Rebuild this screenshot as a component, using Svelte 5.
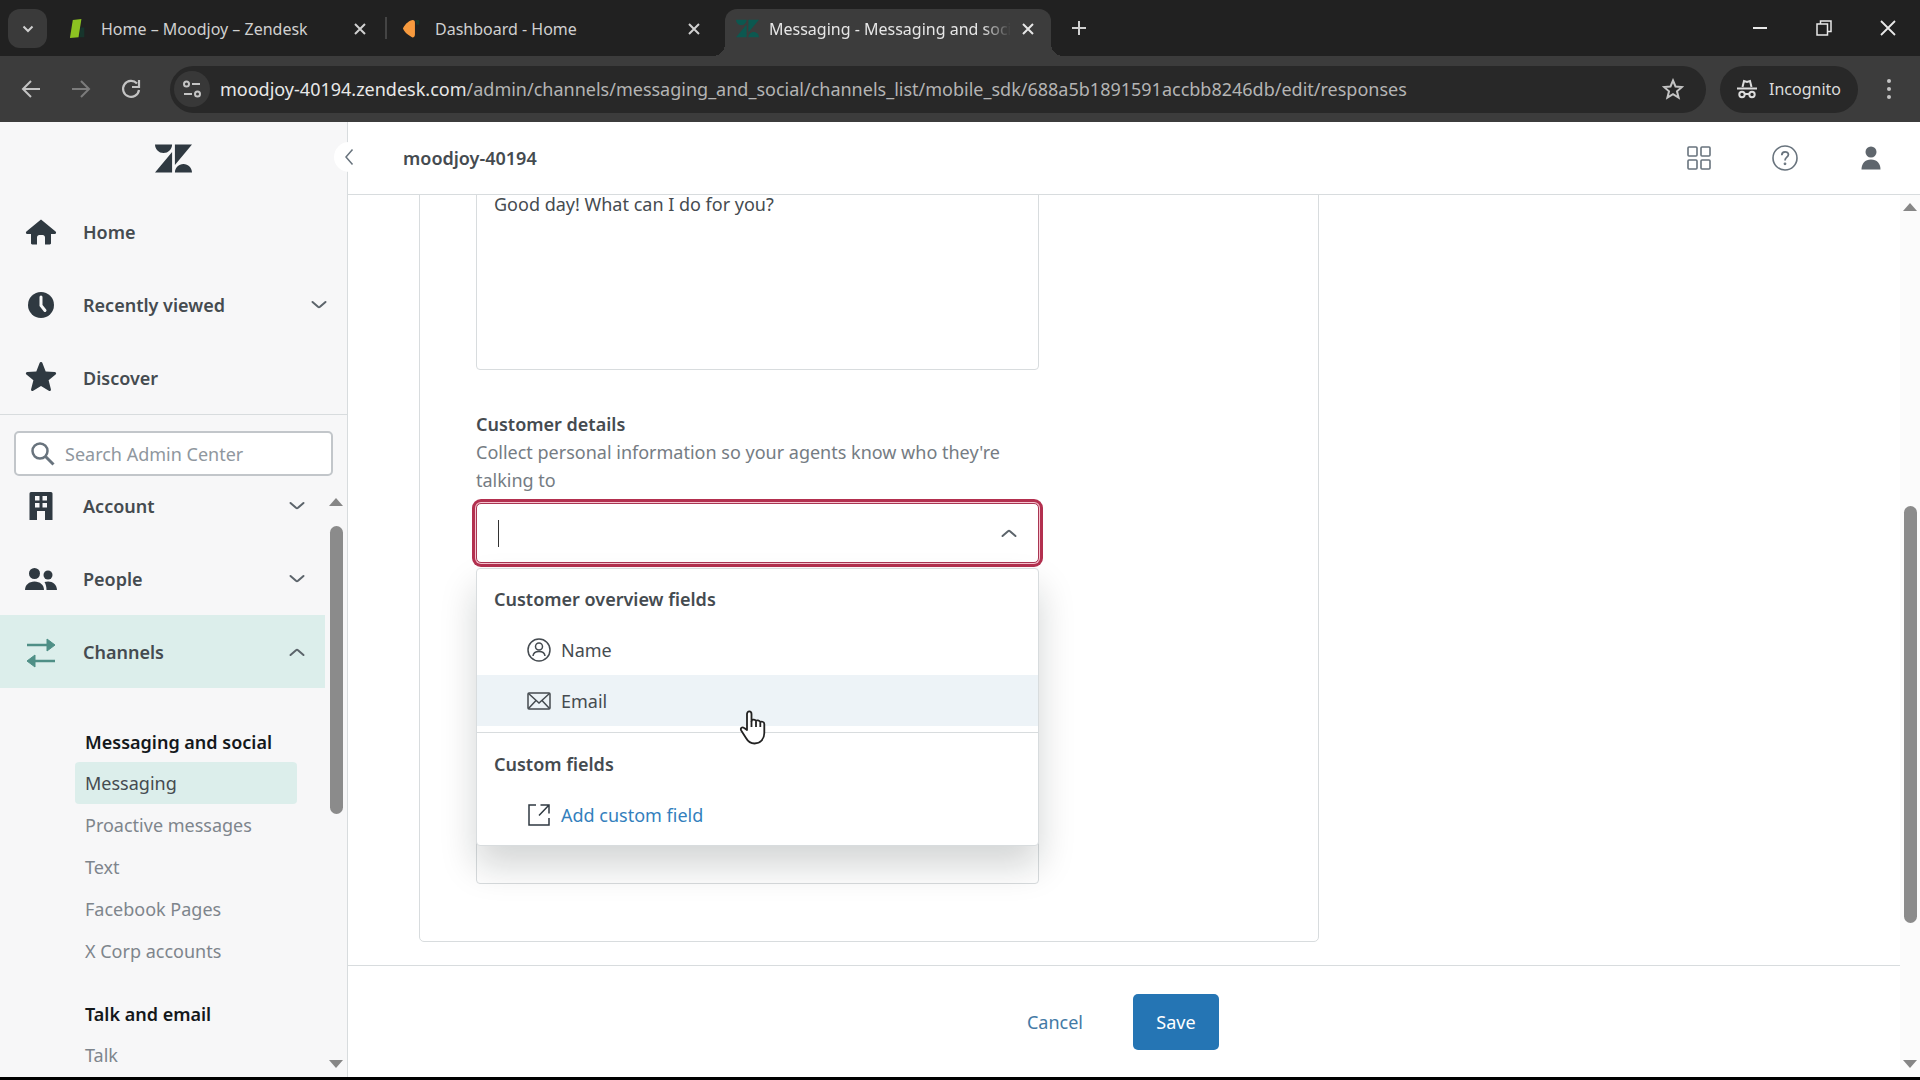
<script lang="ts">
  const tabs = [
    { title: 'Home – Moodjoy – Zendesk', icon: 'support', active: false },
    { title: 'Dashboard - Home', icon: 'chat', active: false },
    { title: 'Messaging - Messaging and social', icon: 'admin', active: true }
  ];

  const mainNav = [
    { label: 'Home', icon: 'home', chevron: '' },
    { label: 'Recently viewed', icon: 'clock', chevron: 'down' },
    { label: 'Discover', icon: 'star', chevron: '' }
  ];

  const adminNav = [
    { label: 'Account', icon: 'building', chevron: 'down', active: false },
    { label: 'People', icon: 'people', chevron: 'down', active: false },
    { label: 'Channels', icon: 'channels', chevron: 'up', active: true }
  ];

  const groups = [
    {
      title: 'Messaging and social',
      links: ['Messaging', 'Proactive messages', 'Text', 'Facebook Pages', 'X Corp accounts']
    },
    { title: 'Talk and email', links: ['Talk'] }
  ];

  let current = $state('Messaging');
  let response = $state('Good day! What can I do for you?');
  let followUp = $state('');
  let search = $state('');
  let field = $state('');
</script>

{#snippet zendesk()}
  <path d="M12.914 2.904V16.29L24 2.905H12.914zM0 2.906C0 5.966 2.483 8.45 5.543 8.45s5.542-2.484 5.543-5.544H0zm11.086 4.807L0 21.096h11.086V7.714zm7.37 7.84c-3.063 0-5.542 2.48-5.542 5.543H24c0-3.06-2.48-5.543-5.543-5.543z" />
{/snippet}

{#snippet chevron(dir: string)}
  <svg class="chevron" viewBox="0 0 16 10" fill="none" stroke="currentColor" stroke-width="2" stroke-linecap="round">
    {#if dir === 'up'}
      <path d="M1.5 8 L7 3.2 Q8 2.4 9 3.2 L14.5 8" />
    {:else}
      <path d="M1.5 2 L7 6.8 Q8 7.6 9 6.8 L14.5 2" />
    {/if}
  </svg>
{/snippet}

{#snippet cross()}
  <svg width="14" height="14" viewBox="0 0 14 14" stroke="currentColor" stroke-width="2"><path d="M2 2l10 10M12 2L2 12" /></svg>
{/snippet}

{#snippet navIcon(name: string)}
  <svg class="nav-icon" viewBox="0 0 32 32" fill="currentColor">
    {#if name === 'home'}
      <path d="M16 3.5 1.4 15.4c-1 .9-.4 2.6.9 2.6H6v9.2c0 .7.5 1.2 1.200 1.200H12v-7c0-1.300 1-2.300 2.300-2.300h3.400c1.300 0 2.300 1 2.300 2.300v7h4.800c.7 0 1.200-.5 1.200-1.200V18h3.700c1.300 0 1.900-1.700.9-2.600z" />
    {:else if name === 'clock'}
      <circle cx="16" cy="16" r="13" />
      <path d="M16 8v8.500l4 5" fill="none" stroke="#f7f8f8" stroke-width="3" stroke-linecap="round" />
    {:else if name === 'star'}
      <path d="M14.700 0.800c.5-1.100 2.100-1.100 2.600 0l3.400 8.600 9.100.6c1.300.1 1.800 1.700.8 2.500l-7 5.800 2.300 9c.3 1.200-1 2.200-2.100 1.500L16 23.900l-7.800 4.900c-1.100.7-2.400-.3-2.100-1.500l2.300-9-7-5.800c-1-.8-.5-2.400.8-2.500l9.100-.6z" />
    {:else if name === 'building'}
      <path fill-rule="evenodd" d="M6 2h20a1.500 1.500 0 0 1 1.500 1.500V30H20v-9h-8v9H4.500V3.500A1.500 1.500 0 0 1 6 2zm4 4v4.500h4.500V6zm7.500 0v4.500H22V6zM10 13v4.500h4.500V13zm7.500 0v4.500H22V13z" />
    {:else if name === 'people'}
      <circle cx="9.500" cy="10.500" r="5.500" />
      <path d="M0 27c0-5 4-8.500 9.500-8.500S19 22 19 27z" />
      <circle cx="23" cy="12" r="4.500" />
      <path d="M19.500 19c6-2 12.500 1.200 12.500 8H21.500c0-3-.6-5.800-2-8z" />
    {:else}
      <g fill="#4f8f86" stroke="#4f8f86">
        <path d="M2 9h21M30 25H9" stroke-width="2.500" />
        <path d="M22 3l8 6-8 6zM10 19l-8 6 8 6z" />
      </g>
    {/if}
  </svg>
{/snippet}

<div class="window">
  <header class="tabstrip">
    <button class="tab-search" aria-label="Search tabs">
      <svg width="12" height="8" viewBox="0 0 12 8" fill="none" stroke="currentColor" stroke-width="2"><path d="M1.500 1.500 6 6l4.500-4.500" /></svg>
    </button>
    <div class="tabs">
      {#each tabs as tab}
        <div class="tab" class:active={tab.active}>
          <svg class="favicon" viewBox="0 0 24 24">
            {#if tab.icon === 'support'}
              <path d="M5 3l9-1-3 19-9 1z" fill="#8cc221" />
              <path d="M13 11h4v10h-5z" fill="#17352c" />
            {:else if tab.icon === 'chat'}
              <path d="M11 3c2 0 2.500 1 2.500 3v12c0 2-1 4-3 3C6 19 2 15 1 12 2 9 6 4 11 3z" fill="#f79a3e" />
              <path d="M14 3h4v5h-3z" fill="#17352c" />
            {:else}
              <g fill="#0c5850">{@render zendesk()}</g>
            {/if}
          </svg>
          <span class="tab-title">{tab.title}</span>
          <button class="plain" aria-label="Close tab">{@render cross()}</button>
        </div>
      {/each}
    </div>
    <button class="plain new-tab" aria-label="New tab">
      <svg width="16" height="16" viewBox="0 0 16 16" stroke="currentColor" stroke-width="2"><path d="M8 1v14M1 8h14" /></svg>
    </button>
    <div class="controls">
      <button aria-label="Minimize"><svg width="16" height="16" viewBox="0 0 16 16" stroke="currentColor" stroke-width="2"><path d="M1 8h14" /></svg></button>
      <button aria-label="Restore"><svg width="16" height="16" viewBox="0 0 16 16" fill="none" stroke="currentColor" stroke-width="1.500"><path d="M1 4h10.500v11H1zM4.500 4V1H15v10.500h-3.500" /></svg></button>
      <button aria-label="Close"><svg width="16" height="16" viewBox="0 0 16 16" stroke="currentColor" stroke-width="1.800"><path d="M1 1l14 14M15 1L1 15" /></svg></button>
    </div>
  </header>

  <div class="toolbar">
    <button class="tool" aria-label="Back">
      <svg width="20" height="20" viewBox="0 0 20 20" fill="none" stroke="currentColor" stroke-width="2"><path d="M19 10H2.500M10 2l-8 8 8 8" /></svg>
    </button>
    <button class="tool dim" aria-label="Forward">
      <svg width="20" height="20" viewBox="0 0 20 20" fill="none" stroke="currentColor" stroke-width="2"><path d="M1 10h16.500M10 2l8 8-8 8" /></svg>
    </button>
    <button class="tool" aria-label="Reload">
      <svg width="20" height="20" viewBox="0 0 20 20" fill="none" stroke="currentColor" stroke-width="2.200"><path d="M16 4.500A8 8 0 1 0 18 11" /><path d="M18 1v7h-7" /></svg>
    </button>
    <div class="omnibox">
      <button class="site-info" aria-label="Site information">
        <svg width="20" height="20" viewBox="0 0 20 20" fill="none" stroke="currentColor" stroke-width="2"><circle cx="4.500" cy="5" r="2.500" /><path d="M10 5h8M2 15h8" /><circle cx="15.500" cy="15" r="2.500" /></svg>
      </button>
      <span class="url"><b>moodjoy-40194.zendesk.com</b>/admin/channels/messaging_and_social/channels_list/mobile_sdk/688a5b1891591accbb8246db/edit/responses</span>
      <button class="plain" aria-label="Bookmark this tab">
        <svg width="22" height="22" viewBox="0 0 22 22" fill="none" stroke="currentColor" stroke-width="2"><path d="M11 2.500l2.500 6 6.500.5-5 4.300 1.600 6.400L11 16.200l-5.600 3.500L7 13.300 2 9l6.500-.5z" /></svg>
      </button>
    </div>
    <div class="incognito">
      <svg width="20" height="20" viewBox="0 0 20 20" fill="none" stroke="currentColor" stroke-width="2"><path d="M5.500 8 7 2l3 1 3-1 1.500 6M0 9.500h20" /><circle cx="5" cy="15.500" r="2.700" /><circle cx="15" cy="15.500" r="2.700" /><path d="M7.500 15h5" /></svg>
      Incognito
    </div>
    <button class="tool" aria-label="Chrome menu">
      <svg width="6" height="22" viewBox="0 0 6 22" fill="currentColor"><circle cx="3" cy="3" r="2" /><circle cx="3" cy="11" r="2" /><circle cx="3" cy="19" r="2" /></svg>
    </button>
  </div>

  <div class="page">
    <aside class="sidebar">
      <div class="logo">
        <svg width="37" height="37" viewBox="0 0 24 24" fill="#2f3941">{@render zendesk()}</svg>
      </div>
      <nav class="main-nav">
        {#each mainNav as item}
          <button class="nav-row">
            {@render navIcon(item.icon)}
            <span>{item.label}</span>
            {#if item.chevron}{@render chevron(item.chevron)}{/if}
          </button>
        {/each}
      </nav>
      <label class="search">
        <svg width="24" height="24" viewBox="0 0 24 24" fill="none" stroke="#68737d"><circle cx="9" cy="9" r="7.500" stroke-width="2.500" /><path d="M14.500 14.500l8 8" stroke-width="3" /></svg>
        <input type="text" placeholder="Search Admin Center" aria-label="Search Admin Center" bind:value={search} />
      </label>
      <div class="admin">
        <nav class="admin-nav">
          {#each adminNav as item}
            <button class="nav-row" class:active={item.active}>
              {@render navIcon(item.icon)}
              <span>{item.label}</span>
              {@render chevron(item.chevron)}
            </button>
          {/each}
          {#each groups as group}
            <section>
              <h2>{group.title}</h2>
              {#each group.links as link}
                <a href="#{link}" class:current={link === current} onclick={() => (current = link)}><span>{link}</span></a>
              {/each}
            </section>
          {/each}
        </nav>
        <div class="scrollbar side">
          <i class="arrow up"></i>
          <div class="track"><i class="thumb"></i></div>
          <i class="arrow down"></i>
        </div>
      </div>
      <button class="collapse" aria-label="Collapse sidebar">
        <svg width="10" height="18" viewBox="0 0 10 18" fill="none" stroke="#68737d" stroke-width="1.500"><path d="M8.500 1.500 2 9l6.500 7.500" /></svg>
      </button>
    </aside>

    <main>
      <div class="topbar">
        <h1>moodjoy-40194</h1>
        <button class="plain" aria-label="Products">
          <svg width="26" height="26" viewBox="0 0 26 26" fill="none" stroke="currentColor" stroke-width="1.600"><rect x="2" y="2" width="9" height="9" rx="1" /><rect x="15" y="2" width="9" height="9" rx="1" /><rect x="2" y="15" width="9" height="9" rx="1" /><rect x="15" y="15" width="9" height="9" rx="1" /></svg>
        </button>
        <button class="plain" aria-label="Help">
          <svg width="26" height="26" viewBox="0 0 26 26" fill="none" stroke="currentColor" stroke-width="1.600"><circle cx="13" cy="13" r="12" /><path d="M9.800 10.200c0-4.600 6.600-4.200 6.600-.6 0 2.600-3.400 2.700-3.400 6" stroke-width="1.800" /><circle cx="13" cy="18.800" r=".6" /></svg>
        </button>
        <button class="plain" aria-label="Profile">
          <svg width="26" height="26" viewBox="0 0 26 26" fill="#5f666d"><circle cx="13" cy="7" r="5.500" /><path d="M3.500 24.500c0-6 3.500-10 9.500-10s9.500 4 9.500 10z" /></svg>
        </button>
      </div>

      <div class="body">
        <div class="column">
          <div class="scroll">
            <div class="card">
              <textarea class="response" aria-label="First message" bind:value={response}></textarea>
              <label class="title" for="details">Customer details</label>
              <p class="hint">Collect personal information so your agents know who they're talking to</p>
              <div class="combo">
                <i class="caret"></i>
                <input id="details" type="text" role="combobox" aria-expanded="true" aria-controls="fields" bind:value={field} />
                {@render chevron('up')}
                <div class="menu" id="fields">
                  <h3>Customer overview fields</h3>
                  <button class="option">
                    <svg width="24" height="24" viewBox="0 0 24 24" fill="none" stroke="currentColor" stroke-width="1.500"><circle cx="12" cy="12" r="11" /><circle cx="12" cy="8.500" r="3.500" /><path d="M6 18c.5-6 11.500-6 12 0" /></svg>
                    Name
                  </button>
                  <button class="option hover">
                    <svg width="24" height="24" viewBox="0 0 24 24" fill="none" stroke="currentColor" stroke-width="1.500"><rect x="1" y="4" width="22" height="16" rx="1" /><path d="M1.500 4.500 12 14 22.500 4.500M1.500 19.500l7.500-8M22.500 19.500l-7.500-8" /></svg>
                    Email
                    <svg class="pointer" viewBox="0 0 28 35" fill="#fff" stroke="#222" stroke-width="1.800" stroke-linejoin="round">
                      <path d="M8 20V4c0-3.500 4.500-3.500 4.500 0v7c0-2 4.200-2 4.500.5 0-1.800 4-1.500 4.300 1 .5-1.500 4-1 4 1.500v9c0 6-3.800 10.500-9.800 10.500-4.500 0-6.500-2-8.500-5.500L2.200 20.500c-1.200-2.500 1-4 3-2.500z" />
                      <path d="M12.500 11v6M17 12v5M21.300 13v4" />
                    </svg>
                  </button>
                  <hr />
                  <h3>Custom fields</h3>
                  <a class="option" href="#custom-field">
                    <svg width="24" height="24" viewBox="0 0 24 24" fill="none" stroke="#2f3941" stroke-width="1.500"><path d="M9 2H2v20h20v-7M13.500 2H22v8.500M22 2 12 12.500" /></svg>
                    Add custom field
                  </a>
                </div>
              </div>
              <textarea class="follow-up" aria-label="Follow-up message" bind:value={followUp}></textarea>
            </div>
          </div>
          <footer>
            <div class="actions">
              <button class="cancel">Cancel</button>
              <button class="save">Save</button>
            </div>
          </footer>
        </div>
        <div class="scrollbar">
          <i class="arrow up"></i>
          <div class="track"><i class="thumb"></i></div>
          <i class="arrow down"></i>
        </div>
      </div>
    </main>
  </div>
</div>

<style>
  :global(body) {
    margin: 0;
    overflow: hidden;
  }

  .window {
    height: 100vh;
    box-sizing: border-box;
    display: flex;
    flex-direction: column;
    border-bottom: 3px solid #000;
    font-family: 'Noto Sans', sans-serif;
    font-size: 18px;
    line-height: 28px;
    color: #454b50;
    background: #3c3c3c;
  }

  .window * {
    box-sizing: border-box;
  }

  button,
  input,
  textarea {
    font: inherit;
    color: inherit;
    border: 0;
    background: none;
    padding: 0;
    outline: none;
  }

  svg {
    flex: none;
    display: block;
  }

  .plain {
    display: flex;
  }

  /* browser tabs */
  .tabstrip {
    flex: 0 0 56px;
    display: flex;
    padding-left: 8px;
    background: #212121;
    color: #d0d0d0;
    font-size: 16px;
  }

  .tab-search {
    width: 39px;
    height: 39px;
    margin: 9px 10px 0 0;
    display: grid;
    place-items: center;
    border-radius: 12px;
    background: #3a3a3a;
  }

  .tabs {
    display: flex;
    gap: 8px;
    min-width: 0;
  }

  .tab {
    position: relative;
    flex: 0 1 326px;
    width: 326px;
    min-width: 0;
    margin-top: 9px;
    padding: 0 16px 8px 11px;
    display: flex;
    align-items: center;
    gap: 10px;
  }

  .tab:first-child::after {
    content: '';
    position: absolute;
    right: -4px;
    top: 8px;
    width: 2px;
    height: 22px;
    background: #444;
  }

  .tab.active {
    background: #3c3c3c;
    border-radius: 12px 12px 0 0;
    color: #e6e6e6;
  }

  .tab.active::before,
  .tab.active::after {
    content: '';
    position: absolute;
    bottom: 0;
    top: auto;
    width: 12px;
    height: 12px;
  }

  .tab.active::before {
    left: -12px;
    background: radial-gradient(circle at 0 0, transparent 12px, #3c3c3c 12px);
  }

  .tab.active::after {
    right: -12px;
    background: radial-gradient(circle at 100% 0, transparent 12px, #3c3c3c 12px);
  }

  .favicon {
    width: 23px;
    height: 23px;
  }

  .tab-title {
    flex: 1;
    overflow: hidden;
    white-space: nowrap;
  }

  .active .tab-title {
    mask-image: linear-gradient(90deg, #000 88%, transparent);
  }

  .new-tab {
    margin: 20px 0 0 20px;
    align-self: flex-start;
  }

  .controls {
    margin-left: auto;
    display: flex;
    color: #e8e8e8;
  }

  .controls button {
    width: 64px;
    display: grid;
    place-items: center;
  }

  /* address bar */
  .toolbar {
    flex: 0 0 66px;
    display: flex;
    align-items: center;
    gap: 4px;
    padding: 0 8px;
    color: #c4c4c4;
    background: #3c3c3c;
  }

  .tool {
    width: 46px;
    height: 46px;
    display: grid;
    place-items: center;
  }

  .dim {
    color: #7c7c7c;
  }

  .omnibox {
    flex: 1;
    min-width: 0;
    height: 47px;
    margin: 0 10px 0 12px;
    padding: 0 22px 0 4px;
    display: flex;
    align-items: center;
    gap: 10px;
    border-radius: 24px;
    background: #282828;
  }

  .site-info {
    width: 36px;
    height: 36px;
    display: grid;
    place-items: center;
    border-radius: 50%;
    background: #383838;
  }

  .url {
    flex: 1;
    overflow: hidden;
    white-space: nowrap;
    color: #b4b4b4;
  }

  .url b {
    font-weight: 400;
    color: #e8e8e8;
  }

  .incognito {
    height: 47px;
    width: 138px;
    margin-right: 4px;
    display: flex;
    align-items: center;
    justify-content: center;
    gap: 12px;
    border-radius: 24px;
    background: #282828;
    color: #dcdcdc;
    font-size: 16px;
  }

  /* admin center */
  .page {
    flex: 1;
    min-height: 0;
    display: flex;
    background: #fff;
  }

  .sidebar {
    position: relative;
    flex: 0 0 348px;
    min-width: 0;
    display: flex;
    flex-direction: column;
    border-right: 1px solid #d8dcde;
    background: #f7f7f8;
  }

  .logo {
    flex: 0 0 73px;
    display: grid;
    place-items: center;
  }

  .main-nav {
    border-bottom: 1px solid #d8dcde;
  }

  .nav-row {
    width: 100%;
    height: 73px;
    padding: 0 20px 0 25px;
    display: flex;
    align-items: center;
    gap: 26px;
    text-align: left;
    font-weight: 600;
  }

  .nav-row span {
    flex: 1;
  }

  .nav-row.active {
    background: #dceeeb;
  }

  .nav-icon {
    width: 32px;
    height: 32px;
    color: #2f3941;
  }

  .chevron {
    width: 16px;
    height: 10px;
    color: #5c646b;
  }

  .search {
    flex: 0 0 45px;
    margin: 16px 14px 0;
    padding: 0 15px;
    display: flex;
    align-items: center;
    gap: 10px;
    border: 2px solid #c2c6ca;
    border-radius: 5px;
    background: #fff;
  }

  .search input {
    flex: 1;
    min-width: 0;
  }

  .search input::placeholder {
    color: #8f979e;
    opacity: 1;
  }

  .admin {
    flex: 1;
    min-height: 0;
    display: flex;
    overflow: hidden;
  }

  .admin-nav {
    flex: 1;
    min-width: 0;
    margin-top: -7px;
  }

  section {
    padding: 40px 28px 0 75px;
  }

  section + section {
    padding-top: 28px;
  }

  section h2 {
    margin: 0 0 6px;
    padding-left: 10px;
    font-size: 18px;
    line-height: 28px;
    font-weight: 600;
    white-space: nowrap;
    color: #14181b;
  }

  section a {
    display: block;
    height: 42px;
    padding: 7px 0 0 10px;
    border-radius: 4px;
    color: #7e858c;
    text-decoration: none;
  }

  section a.current {
    background: #dceeeb;
    color: #454b50;
  }

  .collapse {
    position: absolute;
    top: 20px;
    right: -17px;
    width: 30px;
    height: 30px;
    display: grid;
    place-items: center;
    border-radius: 50%;
    background: #fff;
  }

  .scrollbar {
    flex: 0 0 20px;
    display: flex;
    flex-direction: column;
    align-items: center;
    padding: 8px 0 9px;
    background: #fbfbfb;
  }

  .scrollbar.side {
    flex-basis: 22px;
    padding-top: 22px;
    background: none;
  }

  .arrow {
    width: 0;
    height: 0;
    border: 7px solid transparent;
  }

  .arrow.up {
    border-top: 0;
    border-bottom: 8px solid #868686;
  }

  .arrow.down {
    border-bottom: 0;
    border-top: 8px solid #868686;
  }

  .track {
    flex: 1;
    display: flex;
    flex-direction: column;
    justify-content: flex-end;
    padding-bottom: 137px;
  }

  .thumb {
    width: 13px;
    height: 417px;
    border-radius: 7px;
    background: #8b8b8b;
  }

  .side .track {
    justify-content: flex-start;
    padding: 20px 0 0;
  }

  .side .thumb {
    height: 288px;
  }

  main {
    flex: 1;
    min-width: 0;
    display: flex;
    flex-direction: column;
  }

  .topbar {
    flex: 0 0 73px;
    display: flex;
    align-items: center;
    gap: 60px;
    padding: 0 36px 0 55px;
    border-bottom: 1px solid #d8dcde;
    color: #68737d;
  }

  h1 {
    flex: 1;
    margin: 0;
    font-size: 18px;
    line-height: 28px;
    font-weight: 600;
    color: #454b50;
  }

  .body {
    flex: 1;
    min-height: 0;
    display: flex;
  }

  .column {
    flex: 1;
    min-width: 0;
    display: flex;
    flex-direction: column;
  }

  .scroll {
    flex: 1;
    min-height: 0;
    display: flex;
    flex-direction: column;
    justify-content: flex-end;
    padding: 0 71px 23px;
    overflow: hidden;
  }

  .card {
    max-width: 900px;
    padding: 0 279px 57px 56px;
    display: flex;
    flex-direction: column;
    border: 1px solid #d8dcde;
    border-radius: 5px;
  }

  textarea {
    display: block;
    border: 1px solid #d8dcde;
    border-radius: 4px;
    resize: none;
    padding: 13px 17px;
  }

  .response {
    height: 194px;
  }

  .title {
    margin-top: 40px;
    font-weight: 600;
  }

  .hint {
    margin: 0 0 9px;
    color: #757c83;
  }

  .combo {
    position: relative;
    height: 60px;
    padding: 0 21px;
    display: flex;
    align-items: center;
    border: 1px solid #a83552;
    border-radius: 5px;
    box-shadow: 0 0 0 1px #f6c3cf, 0 0 0 4px #b3304f;
  }

  .combo input {
    flex: 1;
    min-width: 0;
    height: 100%;
  }

  .caret {
    width: 1px;
    height: 27px;
    background: #333;
  }

  .menu {
    position: absolute;
    z-index: 1;
    top: 64px;
    left: -1px;
    right: -1px;
    padding: 5px 0;
    border: 1px solid #d8dcde;
    border-radius: 4px;
    background: #fff;
    box-shadow: 0 20px 36px rgba(10, 20, 24, 0.18);
  }

  h3 {
    margin: 0;
    padding: 11px 17px;
    font-size: 18px;
    line-height: 28px;
    font-weight: 600;
  }

  .option {
    position: relative;
    width: 100%;
    height: 51px;
    padding-left: 50px;
    display: flex;
    align-items: center;
    gap: 10px;
  }

  a.option {
    color: #337fbd;
    text-decoration: none;
  }

  .option.hover {
    background: #edf3f7;
  }

  .pointer {
    position: absolute;
    left: 262px;
    top: 35px;
    width: 28px;
    height: 35px;
  }

  hr {
    margin: 6px 0;
    border: 0;
    border-top: 1px solid #d8dcde;
  }

  .follow-up {
    height: 176px;
    margin-top: 145px;
  }

  footer {
    flex: 0 0 112px;
    padding: 0 71px;
    border-top: 1px solid #d8dcde;
  }

  .actions {
    max-width: 900px;
    height: 100%;
    padding-right: 100px;
    display: flex;
    align-items: center;
    justify-content: flex-end;
    gap: 22px;
  }

  .cancel {
    height: 56px;
    padding: 0 28px;
    color: #4379a5;
  }

  .save {
    width: 86px;
    height: 56px;
    border-radius: 5px;
    background: #2575b4;
    color: #fff;
  }
</style>
